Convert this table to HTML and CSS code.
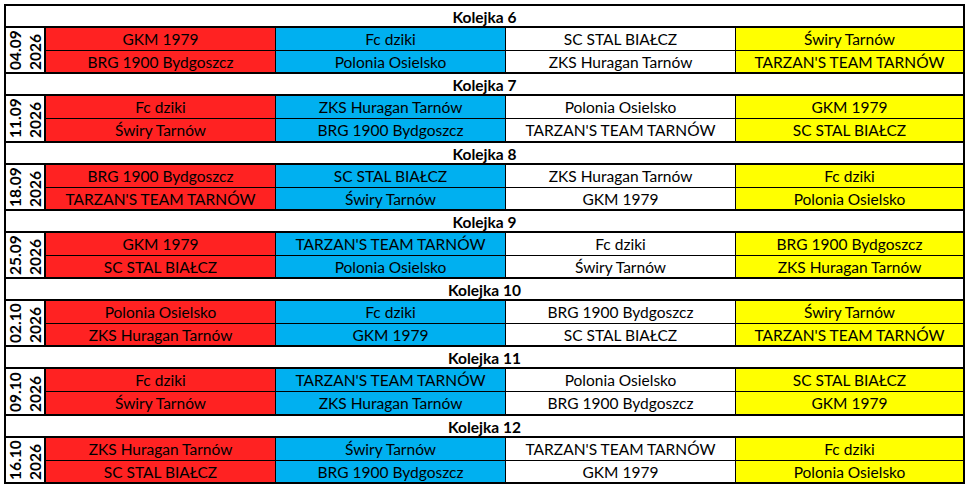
FILE: index.html
```html
<!DOCTYPE html>
<html lang="pl">
<head>
<meta charset="utf-8">
<title>Terminarz</title>
<link rel="stylesheet" href="styles.css">
</head>
<body>
<div class="sheet">
  <section class="block">
    <div class="head">Kolejka 6</div>
    <div class="games">
      <div class="date"><span>04.09<br>2026</span></div>
      <div class="c red top">GKM 1979</div><div class="c blue top">Fc dziki</div><div class="c white top">SC STAL BIAŁCZ</div><div class="c yellow top">Świry Tarnów</div>
      <div class="c red">BRG 1900 Bydgoszcz</div><div class="c blue">Polonia Osielsko</div><div class="c white">ZKS Huragan Tarnów</div><div class="c yellow">TARZAN'S TEAM TARNÓW</div>
    </div>
  </section>
  <section class="block">
    <div class="head">Kolejka 7</div>
    <div class="games">
      <div class="date"><span>11.09<br>2026</span></div>
      <div class="c red top">Fc dziki</div><div class="c blue top">ZKS Huragan Tarnów</div><div class="c white top">Polonia Osielsko</div><div class="c yellow top">GKM 1979</div>
      <div class="c red">Świry Tarnów</div><div class="c blue">BRG 1900 Bydgoszcz</div><div class="c white">TARZAN'S TEAM TARNÓW</div><div class="c yellow">SC STAL BIAŁCZ</div>
    </div>
  </section>
  <section class="block">
    <div class="head">Kolejka 8</div>
    <div class="games">
      <div class="date"><span>18.09<br>2026</span></div>
      <div class="c red top">BRG 1900 Bydgoszcz</div><div class="c blue top">SC STAL BIAŁCZ</div><div class="c white top">ZKS Huragan Tarnów</div><div class="c yellow top">Fc dziki</div>
      <div class="c red">TARZAN'S TEAM TARNÓW</div><div class="c blue">Świry Tarnów</div><div class="c white">GKM 1979</div><div class="c yellow">Polonia Osielsko</div>
    </div>
  </section>
  <section class="block">
    <div class="head">Kolejka 9</div>
    <div class="games">
      <div class="date"><span>25.09<br>2026</span></div>
      <div class="c red top">GKM 1979</div><div class="c blue top">TARZAN'S TEAM TARNÓW</div><div class="c white top">Fc dziki</div><div class="c yellow top">BRG 1900 Bydgoszcz</div>
      <div class="c red">SC STAL BIAŁCZ</div><div class="c blue">Polonia Osielsko</div><div class="c white">Świry Tarnów</div><div class="c yellow">ZKS Huragan Tarnów</div>
    </div>
  </section>
  <section class="block">
    <div class="head">Kolejka 10</div>
    <div class="games">
      <div class="date"><span>02.10<br>2026</span></div>
      <div class="c red top">Polonia Osielsko</div><div class="c blue top">Fc dziki</div><div class="c white top">BRG 1900 Bydgoszcz</div><div class="c yellow top">Świry Tarnów</div>
      <div class="c red">ZKS Huragan Tarnów</div><div class="c blue">GKM 1979</div><div class="c white">SC STAL BIAŁCZ</div><div class="c yellow">TARZAN'S TEAM TARNÓW</div>
    </div>
  </section>
  <section class="block">
    <div class="head">Kolejka 11</div>
    <div class="games">
      <div class="date"><span>09.10<br>2026</span></div>
      <div class="c red top">Fc dziki</div><div class="c blue top">TARZAN'S TEAM TARNÓW</div><div class="c white top">Polonia Osielsko</div><div class="c yellow top">SC STAL BIAŁCZ</div>
      <div class="c red">Świry Tarnów</div><div class="c blue">ZKS Huragan Tarnów</div><div class="c white">BRG 1900 Bydgoszcz</div><div class="c yellow">GKM 1979</div>
    </div>
  </section>
  <section class="block">
    <div class="head">Kolejka 12</div>
    <div class="games">
      <div class="date"><span>16.10<br>2026</span></div>
      <div class="c red top">ZKS Huragan Tarnów</div><div class="c blue top">Świry Tarnów</div><div class="c white top">TARZAN'S TEAM TARNÓW</div><div class="c yellow top">Fc dziki</div>
      <div class="c red">SC STAL BIAŁCZ</div><div class="c blue">BRG 1900 Bydgoszcz</div><div class="c white">GKM 1979</div><div class="c yellow">Polonia Osielsko</div>
    </div>
  </section>
</div>
</body>
</html>
```

FILE: styles.css
```css
* { box-sizing: border-box; }
html, body { margin: 0; padding: 0; background: #fff; }
body {
  font-family: Lato, "Open Sans", "Liberation Sans", sans-serif;
  font-size: 15.5px;
  color: #000;
}
.sheet {
  margin: 4px 0 0 4px;
  width: 961px;
  border: 2px solid #000;
}
.block + .block { border-top: 2px solid #000; }
.head {
  height: 22px;
  line-height: 21px;
  padding-top: 1px;
  text-align: center;
  font-weight: 700;
  border-bottom: 2px solid #000;
}
.games {
  display: grid;
  grid-template-columns: 40px 229px 230px 230px 228px;
  grid-template-rows: 23px 21.3px;
}
.date {
  grid-row: span 2;
  border-right: 2px solid #000;
  display: flex;
  align-items: center;
  justify-content: center;
  overflow: visible;
}
.date span {
  writing-mode: vertical-rl;
  transform: rotate(180deg);
  font-weight: 700;
  line-height: 20px;
  height: 40px;
  text-align: start;
  white-space: nowrap;
}
.c {
  text-align: center;
  line-height: 22px;
  white-space: nowrap;
  overflow: hidden;
}
.top { border-bottom: 1px solid #000; }
.blue, .white, .yellow { border-left: 1px solid #000; }
.red { background: #ff2222; }
.blue { background: #00b0f0; }
.white { background: #fff; }
.yellow { background: #ffff00; }
```
